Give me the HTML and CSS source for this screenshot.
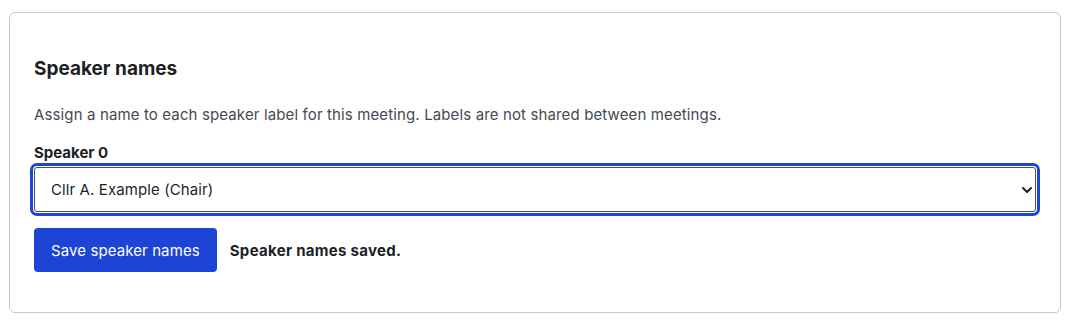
FILE: index.html
```html
<!DOCTYPE html>
<html lang="en">
    <head>
        <meta charset="UTF-8" />
        <meta name="viewport" content="width=device-width, initial-scale=1.0" />
        <title>Speaker names</title>

        <link rel="stylesheet" href="styles.css">

    </head>
    <body>
        <div class="card">
            <h2>Speaker names</h2>
            <p class="hint">Assign a name to each speaker label for this meeting. Labels are not shared between meetings.</p>

            <form id="speaker-form">
                <label for="speaker-0">Speaker 0</label>
                <div class="select-wrap">
                    <select id="speaker-0" name="speaker-0">
                        <option>Cllr A. Example (Chair)</option>
                    </select>
                    <svg class="chevron" width="12" height="8" viewBox="0 0 12 8" aria-hidden="true">
                        <path d="M2 2l4 4 4-4" fill="none" stroke="#222" stroke-width="2" stroke-linecap="round" stroke-linejoin="round"/>
                    </svg>
                </div>

                <div class="actions">
                    <button type="submit">Save speaker names</button>
                    <span class="status" id="status">Speaker names saved.</span>
                </div>
            </form>
        </div>
    </body>
</html>
```

FILE: styles.css
```css
body {
    font-family: Inter, "Noto Sans", Arial, sans-serif;
    background-color: #ffffff;
    color: #1c1f24;
    margin: 0;
    padding: 12px 27px 14px 9px;
}

.card {
    border: 1px solid #c3c7cf;
    border-radius: 6px;
    padding: 43px 24px 40px 24px;
}

h2 {
    font-size: 19px;
    font-weight: 700;
    margin: 0 0 22px;
    line-height: 26px;
}

.hint {
    font-size: 15px;
    letter-spacing: 0.13px;
    color: #444a52;
    margin: 0 0 17px;
    line-height: 22px;
}

label {
    display: block;
    font-size: 15px;
    font-weight: 700;
    margin-bottom: 4px;
    line-height: 20px;
}

.select-wrap {
    position: relative;
    width: 1002px;
}

select {
    display: block;
    width: 100%;
    height: 45px;
    padding: 0 16px;
    font: inherit;
    font-size: 15px;
    letter-spacing: 0.1px;
    color: #1c1f24;
    background: white;
    border: 1px solid #4b4f57;
    border-radius: 3px;
    appearance: none;
    outline: 3px solid #1d44d4;
    outline-offset: 1px;
}

.chevron {
    position: absolute;
    right: 3px;
    top: 19px;
    pointer-events: none;
}

.actions {
    display: flex;
    align-items: center;
    gap: 13px;
    margin-top: 16px;
}

button {
    height: 44px;
    padding: 0 17px;
    background-color: #1d44d4;
    color: white;
    border: none;
    border-radius: 4px;
    font: inherit;
    font-size: 15px;
    letter-spacing: 0.1px;
    cursor: pointer;
}

.status {
    font-size: 15px;
    font-weight: 700;
    letter-spacing: 0.3px;
}
```
